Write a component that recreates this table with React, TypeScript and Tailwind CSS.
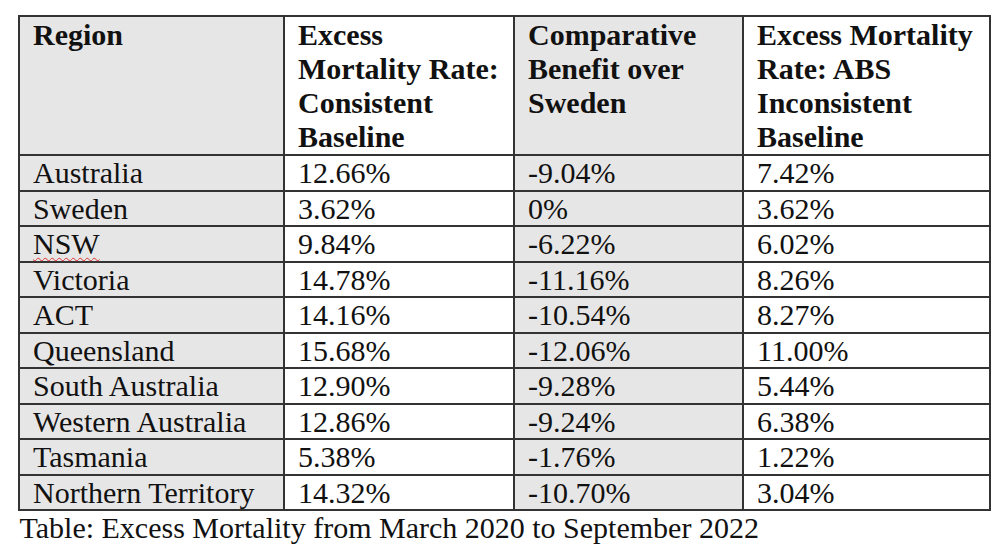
import React from "react"

const rows = [
  ["Australia", "12.66%", "-9.04%", "7.42%"],
  ["Sweden", "3.62%", "0%", "3.62%"],
  ["NSW", "9.84%", "-6.22%", "6.02%"],
  ["Victoria", "14.78%", "-11.16%", "8.26%"],
  ["ACT", "14.16%", "-10.54%", "8.27%"],
  ["Queensland", "15.68%", "-12.06%", "11.00%"],
  ["South Australia", "12.90%", "-9.28%", "5.44%"],
  ["Western Australia", "12.86%", "-9.24%", "6.38%"],
  ["Tasmania", "5.38%", "-1.76%", "1.22%"],
  ["Northern Territory", "14.32%", "-10.70%", "3.04%"],
]

const gray = "bg-[#e7e6e6]"

export default function App() {
  return (
    <div className="w-[1000px] h-[557px] bg-white text-[#111] font-['Liberation_Serif',serif] text-[30px]">
      <div className="pl-[18px] pt-[15px]">
        <table className="w-[971px] border-collapse table-fixed border-2 border-[#333]">
          <colgroup>
            <col className="w-[265px]" />
            <col className="w-[230px]" />
            <col className="w-[229px]" />
            <col className="w-[247px]" />
          </colgroup>
          <thead>
            <tr className="align-top text-left font-bold leading-[34px]">
              <th className={`${gray} border-2 border-[#333] px-[13px] pt-[1px] pb-0`}>Region</th>
              <th className="border-2 border-[#333] px-[13px] pt-[1px] pb-0">
                Excess Mortality Rate: Consistent Baseline
              </th>
              <th className={`${gray} border-2 border-[#333] px-[13px] pt-[1px] pb-0`}>
                Comparative Benefit over Sweden
              </th>
              <th className="border-2 border-[#333] px-[13px] pt-[1px] pb-0">
                Excess Mortality Rate: ABS Inconsistent Baseline
              </th>
            </tr>
          </thead>
          <tbody>
            {rows.map((r) => (
              <tr key={r[0]} className="leading-[32.5px] align-top">
                <td className={`${gray} border-2 border-[#333] px-[13px] pt-[1px] pb-0 whitespace-nowrap`}>
                  {r[0] === "NSW" ? (
                    <span className="underline decoration-wavy decoration-[#e03030] decoration-1 underline-offset-[3px]">NSW</span>
                  ) : (
                    r[0]
                  )}
                </td>
                <td className="border-2 border-[#333] px-[13px] pt-[1px] pb-0">{r[1]}</td>
                <td className={`${gray} border-2 border-[#333] px-[13px] pt-[1px] pb-0`}>{r[2]}</td>
                <td className="border-2 border-[#333] px-[13px] pt-[1px] pb-0">{r[3]}</td>
              </tr>
            ))}
          </tbody>
        </table>
        <p className="pl-[1.5px] leading-[34px]">
          Table: Excess Mortality from March 2020 to September 2022
        </p>
      </div>
    </div>
  )
}
